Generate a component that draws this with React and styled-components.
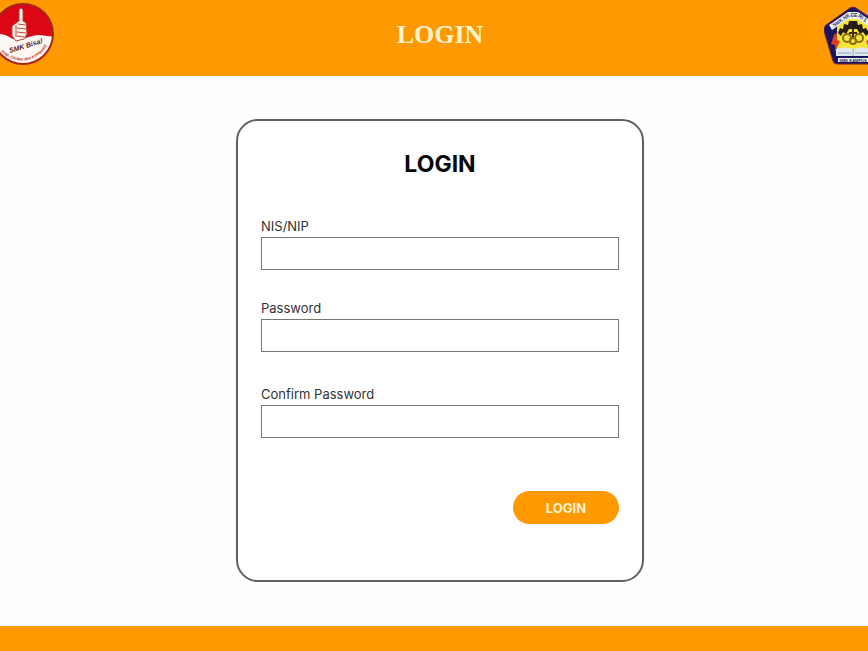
import React from "react";
import styled, { createGlobalStyle } from "styled-components";

const ORANGE = "#ff9900";

const GlobalStyle = createGlobalStyle`
  *, *::before, *::after { box-sizing: border-box; }
  body { margin: 0; background: #fefefe; overflow-x: hidden; }
`;

const Page = styled.div`
  min-height: 100vh;
  margin: 0 -20px 0 -8px;
  display: flex;
  flex-direction: column;
  font-family: Inter, "Liberation Sans", sans-serif;
`;

const Header = styled.header`
  height: 76px;
  flex: none;
  padding-bottom: 6px;
  display: flex;
  align-items: center;
  justify-content: space-between;
  background: ${ORANGE};
`;

const SiteTitle = styled.div`
  color: #fff3cf;
  font: bold 26px/32px "Liberation Serif", serif;
`;

const Logo = styled.svg`
  width: 64px;
  height: 64px;
  display: block;
`;

const Main = styled.main`
  flex: 1;
  padding: 43px 32px;
  display: flex;
  justify-content: center;
  align-items: flex-start;
`;

const Card = styled.form`
  width: 100%;
  max-width: 408px;
  padding: 27px 23px 56px;
  display: flex;
  flex-direction: column;
  border: 2px solid #606060;
  border-radius: 22px;
  background: #fff;
`;

const CardTitle = styled.h1`
  margin: 0 0 38px;
  color: #080808;
  font-size: 23px;
  font-weight: 700;
  line-height: 32px;
  text-align: center;
`;

const Field = styled.div`
  margin-bottom: ${({ $space }) => $space}px;
  display: flex;
  flex-direction: column;
  gap: 3px;
`;

const Label = styled.label`
  color: #333;
  font-size: 13px;
  line-height: 16px;
`;

const Input = styled.input`
  width: 100%;
  height: 33px;
  padding: 0 8px;
  border: 1px solid #777;
  border-radius: 0;
  background: #fff;
  font: inherit;
  font-size: 13px;
`;

const Submit = styled.button`
  width: 106px;
  height: 33px;
  align-self: flex-end;
  border: 0;
  border-radius: 17px;
  background: ${ORANGE};
  color: #fff3cf;
  font: 700 13px/16px Inter, "Liberation Sans", sans-serif;
  cursor: pointer;
`;

const Footer = styled.footer`
  height: 25px;
  flex: none;
  background: ${ORANGE};
`;

const LogoText = styled.text`
  font-family: "Liberation Sans", sans-serif;
  font-weight: bold;
`;

function ThumbLogo() {
  return (
    <Logo viewBox="0 0 64 64" role="img" aria-label="SMK Bisa!">
      <defs>
        <clipPath id="disc"><circle cx="31" cy="31" r="29" /></clipPath>
        <path id="rim" d="M9 49 Q31 66 50 49 Q54 46 57 37" />
      </defs>
      <circle cx="31" cy="31" r="31" fill="#a3281a" />
      <g clipPath="url(#disc)">
        <rect width="64" height="64" fill="#dc0714" />
        <path d="M0 31 C12 30 16 33 21 36 C32 38 37 32 47 32 L64 34 V64 H0Z" fill="#fff8f3" />
      </g>
      <path
        d="M27 7 Q29 3 31 7 L31 18 L34 20 L35 31 L32 36 L24 38 L20 33 L20 23 L27 18 Z"
        fill="#fff3eb" stroke="#b5453d" strokeWidth="1"
      />
      <path d="M26 21 L33 22 M25 25 L34 26 M25 29 L34 30 M25 33 L32 34 M24 22 V34" fill="none" stroke="#b5453d" strokeWidth="1" />
      <LogoText x="18" y="50" fontSize="7" fontStyle="italic" fill="#542018" transform="rotate(-17 18 50)">SMK Bisa!</LogoText>
      <LogoText fontSize="4" fill="#b52a23"><textPath href="#rim">Siap, Cerdas dan Kompetitif</textPath></LogoText>
    </Logo>
  );
}

function SchoolLogo() {
  return (
    <Logo viewBox="0 0 64 64" role="img" aria-label="School emblem">
      <path d="M26 5 Q29 3 32 5 L57 22 Q60 25 59 28 L50 58 Q49 61 46 61 H13 Q10 61 9 58 L0 28 Q-1 25 2 22 Z" fill="#18165d" stroke="#7b2332" strokeWidth="1" />
      <path d="M29 11 L46 23 V49 H13 V23 Z" fill="#f6e539" />
      <path d="M5 22 L24 9 H34 L53 22 L50 27 L34 16 H24 L8 27 Z" fill="#e9edf4" />
      <path id="banner" d="M10 24 L25 14 H34 L50 25" fill="none" />
      <LogoText fontSize="5" fill="#373164"><textPath href="#banner">SMK NEGERI 1</textPath></LogoText>
      <path d="M14 30 L16 25 L19 26 L20 21 L24 22 L25 18 H33 L34 22 L38 21 L39 26 L42 25 L45 30 L42 33 L39 29 L36 31 L33 26 H25 L22 31 L19 29 L17 33 Z" fill="#251d16" />
      <path d="M10 32 L13 30 V37 L16 38 L11 49 L11 42 L7 41 Z" fill="#e23b24" />
      <path d="M48 32 L45 30 V37 L42 38 L47 49 V42 L51 41 Z" fill="#e23b24" />
      <g fill="none" stroke="#8a6b12" strokeWidth="2">
        <circle cx="23" cy="35" r="4" />
        <circle cx="35" cy="35" r="4" />
        <circle cx="29" cy="38" r="3" />
      </g>
      <path d="M25 30 H33 M29 26 V34" stroke="#3b3516" strokeWidth="2" />
      <path d="M12 46 Q21 43 29 46 Q37 43 46 46 V53 H12 Z" fill="#dfe8ef" />
      <path d="M29 46 V53 M14 50 H27 M31 50 H44" stroke="#93a3b5" strokeWidth="1" />
      <rect x="14" y="55" width="30" height="4" fill="#edf0f5" />
      <LogoText x="29" y="59" fontSize="4" textAnchor="middle" fill="#29285c">SMK KAMPUS</LogoText>
    </Logo>
  );
}

const fields = [
  { id: "nis", label: "NIS/NIP", type: "text", space: 30 },
  { id: "password", label: "Password", type: "password", space: 34 },
  { id: "confirm", label: "Confirm Password", type: "password", space: 53 },
];

export default function App() {
  return (
    <>
      <GlobalStyle />
      <Page>
        <Header>
          <ThumbLogo />
          <SiteTitle>LOGIN</SiteTitle>
          <SchoolLogo />
        </Header>
        <Main>
          <Card onSubmit={(event) => event.preventDefault()}>
            <CardTitle>LOGIN</CardTitle>
            {fields.map(({ id, label, type, space }) => (
              <Field key={id} $space={space}>
                <Label htmlFor={id}>{label}</Label>
                <Input id={id} name={id} type={type} />
              </Field>
            ))}
            <Submit type="submit">LOGIN</Submit>
          </Card>
        </Main>
        <Footer />
      </Page>
    </>
  );
}
